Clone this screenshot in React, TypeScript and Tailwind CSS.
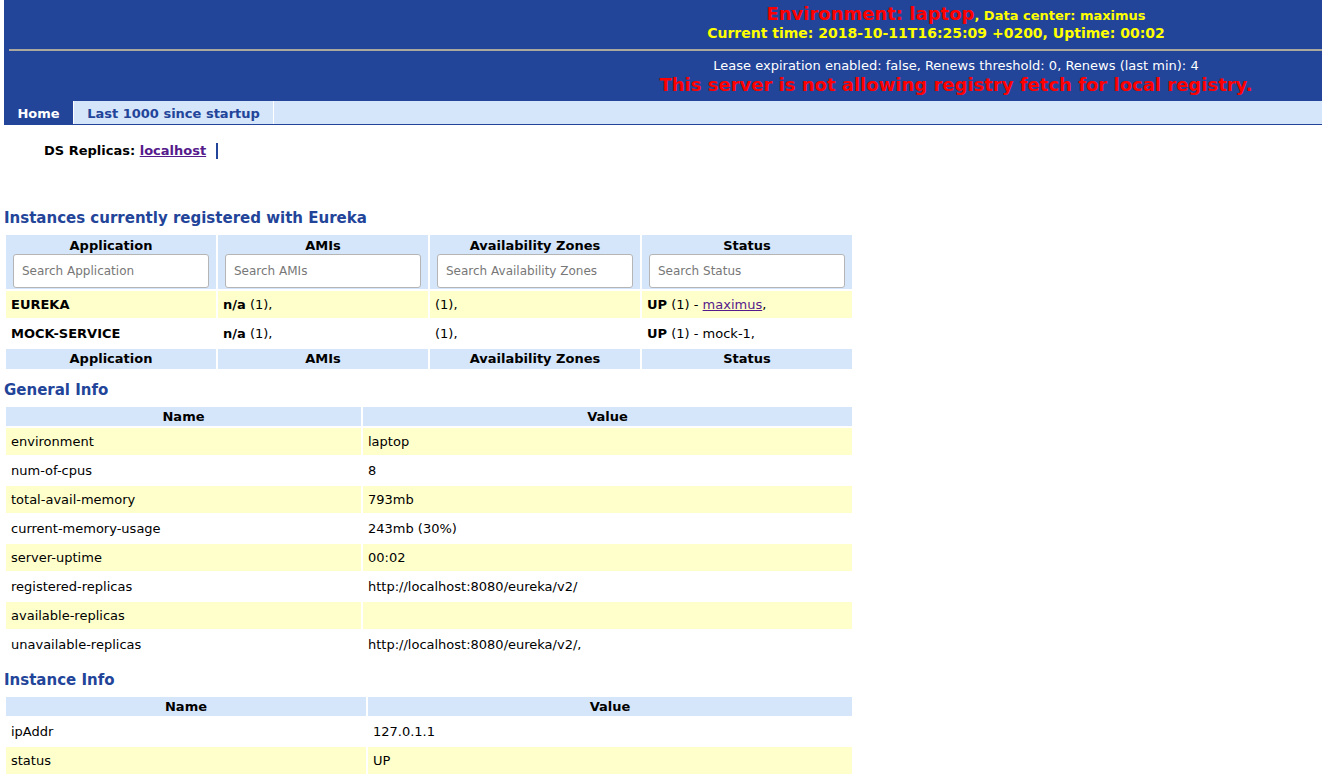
import React from 'react';

const BLUE = 'text-[#224499]';

type Row = { name: string; value: string };

const generalInfo: Row[] = [
  { name: 'environment', value: 'laptop' },
  { name: 'num-of-cpus', value: '8' },
  { name: 'total-avail-memory', value: '793mb' },
  { name: 'current-memory-usage', value: '243mb (30%)' },
  { name: 'server-uptime', value: '00:02' },
  { name: 'registered-replicas', value: 'http://localhost:8080/eureka/v2/' },
  { name: 'available-replicas', value: '' },
  { name: 'unavailable-replicas', value: 'http://localhost:8080/eureka/v2/,' },
];

const instanceInfo: Row[] = [
  { name: 'ipAddr', value: '127.0.1.1' },
  { name: 'status', value: 'UP' },
];

function Heading({ children, className = '' }: { children: React.ReactNode; className?: string }) {
  return <h1 className={`text-[15px] font-bold leading-[18px] ${BLUE} ${className}`}>{children}</h1>;
}

function InfoTable({ rows, nameWidth, oddFirst }: { rows: Row[]; nameWidth: string; oddFirst: boolean }) {
  return (
    <table className="w-[850px] border-separate border-spacing-[2px] text-[13px]">
      <thead>
        <tr className="bg-[#d5e5fa]">
          <th className={`${nameWidth} h-[19px] font-bold leading-[19px] p-0`}>Name</th>
          <th className="h-[19px] font-bold leading-[19px] p-0">Value</th>
        </tr>
      </thead>
      <tbody>
        {rows.map((r, i) => {
          const yellow = oddFirst ? i % 2 === 0 : i % 2 === 1;
          return (
            <tr key={r.name} className={yellow ? 'bg-[#ffffcc]' : 'bg-white'}>
              <td className="h-[27px] px-[5px] py-0">{r.name}</td>
              <td className="h-[27px] px-[5px] py-0">{r.value}</td>
            </tr>
          );
        })}
      </tbody>
    </table>
  );
}

const columns = ['Application', 'AMIs', 'Availability Zones', 'Status'];

export default function App() {
  return (
    <div className="min-h-screen bg-white pl-[4px] text-black font-['DejaVu_Sans',Verdana,sans-serif]">
      {/* header */}
      <div className="h-[101px] bg-[#224499] flex flex-col">
        <div className="flex">
          <div className="w-[586px] shrink-0" />
          <div className="flex-1 text-center">
            <div className="pt-[4px] h-[24px] leading-[20px] font-bold whitespace-nowrap">
              <span className="text-[18px] text-[#ff0000]">Environment: laptop</span>
              <span className="text-[13px] text-[#ffff00]">, Data center: maximus</span>
            </div>
            <div className="h-[18px] leading-[18px] pr-[40px] text-[14px] font-bold text-[#ffff00] whitespace-nowrap">
              Current time: 2018-10-11T16:25:09 +0200, Uptime: 00:02
            </div>
          </div>
        </div>
        <div className="mt-[7px] ml-[5px] h-[2px] bg-[#aaa89e]" />
        <div className="flex">
          <div className="w-[586px] shrink-0" />
          <div className="flex-1 text-center">
            <div className="mt-[6px] h-[18px] leading-[18px] text-[13px] text-white whitespace-nowrap">
              Lease expiration enabled: false, Renews threshold: 0, Renews (last min): 4
            </div>
            <div className="h-[20px] leading-[20px] text-[18px] font-bold text-[#ff0000] whitespace-nowrap">
              This server is not allowing registry fetch for local registry.
            </div>
          </div>
        </div>
      </div>

      {/* tabs */}
      <div className="h-[24px] bg-[#d5e5fa] border-b border-[#224499] flex text-[13px] font-bold leading-[25px]">
        <div className="w-[70px] bg-[#224499] text-white text-center border-r border-white">Home</div>
        <div className={`w-[200px] text-center border-r border-white ${BLUE}`}>Last 1000 since startup</div>
      </div>

      {/* replicas */}
      <div className="mt-[17px] pl-[40px] h-[18px] flex items-center text-[13px] font-bold">
        <span>DS Replicas:&nbsp;</span>
        <a href="#" className="text-[#551a8b] underline">localhost</a>
        <span className="ml-[10px] inline-block w-[2px] h-[16px] bg-[#224499]" />
      </div>

      <Heading className="mt-[49px] mb-[6px]">Instances currently registered with Eureka</Heading>
      <table className="w-[850px] border-separate border-spacing-[2px] text-[13px]">
        <thead>
          <tr className="bg-[#d5e5fa]">
            {columns.map((c) => (
              <th key={c} className="w-1/4 px-[7px] pt-[2px] pb-[1px] font-bold">
                <div className="leading-[17px]">{c}</div>
                <input
                  placeholder={`Search ${c}`}
                  className="w-full h-[34px] rounded-[3px] border border-[#b5b5b5] bg-white px-[8px] text-[12px] font-normal placeholder:text-[#777] outline-none"
                />
              </th>
            ))}
          </tr>
        </thead>
        <tbody>
          <tr className="bg-[#ffffcc]">
            <td className="h-[27px] px-[5px] py-0 font-bold">EUREKA</td>
            <td className="h-[27px] px-[5px] py-0"><b>n/a</b> (1),</td>
            <td className="h-[27px] px-[5px] py-0">(1),</td>
            <td className="h-[27px] px-[5px] py-0">
              <b>UP</b> (1) - <a href="#" className="text-[#551a8b] underline">maximus</a>,
            </td>
          </tr>
          <tr className="bg-white">
            <td className="h-[27px] px-[5px] py-0 font-bold">MOCK-SERVICE</td>
            <td className="h-[27px] px-[5px] py-0"><b>n/a</b> (1),</td>
            <td className="h-[27px] px-[5px] py-0">(1),</td>
            <td className="h-[27px] px-[5px] py-0"><b>UP</b> (1) - mock-1,</td>
          </tr>
          <tr className="bg-[#d5e5fa]">
            {columns.map((c) => (
              <th key={c} className="h-[20px] leading-[20px] p-0 font-bold">{c}</th>
            ))}
          </tr>
        </tbody>
      </table>

      <Heading className="mt-[10px] mb-[6px]">General Info</Heading>
      <InfoTable rows={generalInfo} nameWidth="w-[355px]" oddFirst />

      <Heading className="mt-[11px] mb-[6px]">Instance Info</Heading>
      <InfoTable rows={instanceInfo} nameWidth="w-[360px]" oddFirst={false} />
    </div>
  );
}
